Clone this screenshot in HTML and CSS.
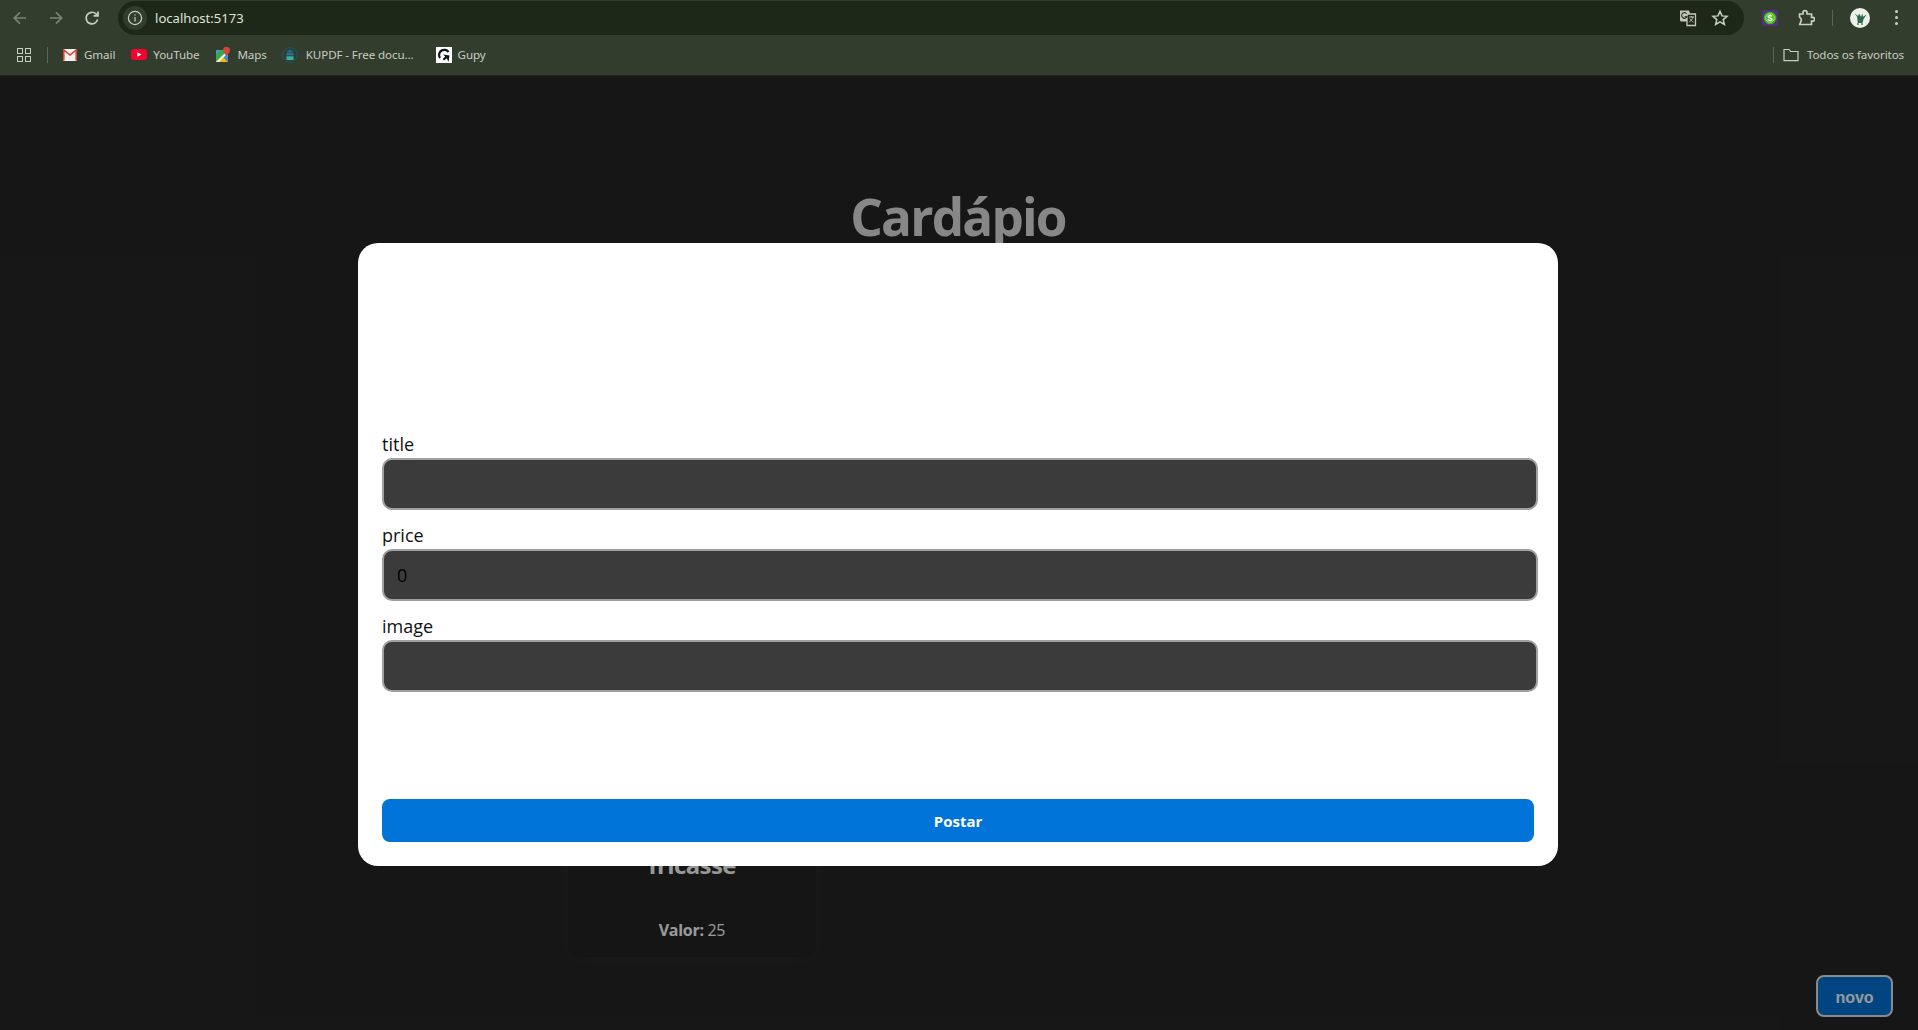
FILE: index.html
```html
<!DOCTYPE html>
<html lang="pt-BR">
<head>
<meta charset="utf-8">
<title>localhost:5173</title>
<link rel="stylesheet" href="styles.css">
</head>
<body>
<header class="browser">
  <div class="toolbar">
    <span class="tool"><svg width="16" height="16" viewBox="0 0 16 16" class="stroke dim"><path d="M14 8H2.500M8 2.300 2.300 8 8 13.700"/></svg></span>
    <span class="tool"><svg width="16" height="16" viewBox="0 0 16 16" class="stroke dim"><path d="M2 8h11.500M8 2.300 13.700 8 8 13.700"/></svg></span>
    <span class="tool"><svg width="16" height="16" viewBox="0 0 16 16" class="stroke"><path d="M13.600 9.400A5.800 5.800 0 1 1 12 3.900L13.800 5.600"/><path d="M14 1.500v4.400H9.600"/></svg></span>
    <div class="omnibox">
      <span class="chip"><svg width="16" height="16" viewBox="0 0 16 16" class="stroke thin"><circle cx="8" cy="8" r="6.600"/><path d="M8 7v4.600M8 4.200v1.400"/></svg></span>
      <span class="url">localhost:5173</span>
      <span class="omni-icons">
        <svg width="18" height="18" viewBox="0 0 18 18"><path d="M1 1.500h9l1 3v8H2.500A1.500 1.500 0 0 1 1 11z" fill="#c4c8bc"/><path d="M8 5h8.500v11.500H8z" fill="#1e2818" stroke="#c4c8bc" stroke-width="1.300"/><path d="M10 8h5M12.500 7v1M14 8c-.5 2-2 4-3.800 5M11 9.500c.8 1.500 2 3 3.500 3.700" fill="none" stroke="#c4c8bc"/><path d="M7.500 4.600a2.800 2.800 0 1 0 .5 3H5.600" fill="none" stroke="#39412f" stroke-width="1.200"/></svg>
        <svg width="18" height="18" viewBox="0 0 18 18" class="stroke thick"><path d="m9 2.300 2 4.600 5 .4-3.800 3.300 1.200 4.900L9 12.900l-4.400 2.600 1.200-4.900L2 7.300l5-.4z"/></svg>
      </span>
    </div>
    <span class="ext"><svg width="16" height="16" viewBox="0 0 16 16"><rect width="16" height="16" rx="2.500" fill="#53307f"/><circle cx="8" cy="8" r="6.300" fill="#3fb512"/><circle cx="8" cy="8" r="4.300" fill="none" stroke="#e8f4de" stroke-width=".6"/><text x="8" y="11.200" text-anchor="middle" class="dollar">$</text></svg></span>
    <span class="puzzle"><svg width="18" height="18" viewBox="0 0 18 18" class="stroke"><path d="M2.500 5H6V3.600a2 2 0 0 1 4 0V5h4.500v3.400h1.200a1.900 1.900 0 0 1 0 3.800h-1.200v3.300H2.800l1.200-3.400a2.200 2.200 0 0 0 0-2.400L2.500 8z"/></svg></span>
    <span class="divider tall"></span>
    <span class="avatar"><svg width="20" height="20" viewBox="0 0 20 20"><circle cx="10" cy="10" r="10" fill="#eef0ea"/><path d="M4.500 5.500l2.500 3 .8 6.500h4.700l1-3.800 3-4.700-3.400 2.200-.8-3.200-1.200 3.200-2-3-1 2.200z" fill="#2c6b4c"/><path d="M8 15v2M12 15v2" stroke="#2c6b4c" stroke-width="1.200"/></svg></span>
    <span class="dots"><i></i><i></i><i></i></span>
  </div>
  <nav class="bookmarks">
    <span class="apps"><i></i><i></i><i></i><i></i></span>
    <span class="divider"></span>
    <a class="mark gmail"><svg width="14" height="12" viewBox="0 0 14 12"><rect width="14" height="12" rx="1" fill="#f1f1ee"/><path d="M.8 11.500V1L7 6l6.200-5v10.500" fill="none" stroke="#d4453a" stroke-width="1.600"/></svg>Gmail</a>
    <a class="mark youtube"><svg width="16" height="11" viewBox="0 0 16 11"><rect width="16" height="11" rx="3" fill="#f7012f"/><path d="m6.300 3.200 4.200 2.300-4.200 2.300z" fill="#fff"/></svg>YouTube</a>
    <a class="mark maps"><svg width="14" height="15" viewBox="0 0 14 15"><path d="M0 3h12v12H0z" fill="#34a853"/><path d="M0 15 6 9l6 6z" fill="#fbbc05"/><path d="M0 15 12 3v3L3 15z" fill="#f1f3e9"/><path d="M12 7v8L8 11z" fill="#4285f4"/><path d="M0 3h4L0 7z" fill="#4f8fe8"/><path d="M10.500 0A3.300 3.300 0 0 1 14 3.300c0 2-3.500 5-3.500 5.500S7 5.300 7 3.300A3.300 3.300 0 0 1 10.500 0z" fill="#d9443a"/></svg>Maps</a>
    <a class="mark kupdf"><svg width="16" height="16" viewBox="0 0 16 16"><circle cx="8" cy="8" r="7.300" fill="none" stroke="#1b5874" stroke-width="1"/><path d="m8 2.500 4 3H4z" fill="#1f6f9c"/><path d="M4.500 6h7v2.500h-7z" fill="#2b6e8e"/><path d="M4.500 9.300h7V13h-7z" fill="#35b39a"/></svg>KUPDF - Free docu...</a>
    <a class="mark gupy"><svg width="16" height="16" viewBox="0 0 16 16"><rect width="16" height="16" fill="#fff"/><path d="M12.500 5A5 5 0 1 0 4 11" fill="none" stroke="#0b1526" stroke-width="2.200"/><path d="m7 7.500 6.500 1-1 6.500-1.700-3.800L8 13.500 6.800 12l2.400-2.400z" fill="#0b1526"/></svg>Gupy</a>
    <span class="divider end"></span>
    <a class="mark all"><svg width="16" height="14" viewBox="0 0 16 14" class="stroke thin"><path d="M1 12.700V1.500h5l1.600 2H15v9.200z"/></svg>Todos os favoritos</a>
  </nav>
</header>

<main class="page">
  <h1 class="heading">Cardápio</h1>
  <section class="menu">
    <article class="card">
      <h2 class="card-title">fricasse</h2>
      <p class="card-price"><b>Valor:</b> 25</p>
    </article>
  </section>
  <button class="new-btn" type="button">novo</button>

  <div class="overlay">
    <form class="modal">
      <div class="field">
        <label class="label" for="title">title</label>
        <input class="input" id="title" type="text">
      </div>
      <div class="field">
        <label class="label" for="price">price</label>
        <input class="input" id="price" type="text" value="0">
      </div>
      <div class="field">
        <label class="label" for="image">image</label>
        <input class="input" id="image" type="text">
      </div>
      <button class="submit" type="button">Postar</button>
    </form>
  </div>
</main>
</body>
</html>
```

FILE: styles.css
```css
* { box-sizing: border-box; }
html, body { height: 100%; }
body {
  margin: 0;
  display: flex;
  flex-direction: column;
  overflow: hidden;
  background: #262626;
  font-family: "Open Sans", "Noto Sans", sans-serif;
}

/* browser chrome */
.browser { flex: none; height: 76px; background: #333d2e; border-bottom: 1px solid #20261c; font-size: 12px; color: #c8cdc0; }
.toolbar { height: 35px; display: flex; align-items: center; padding-left: 2px; }
.tool { width: 36px; height: 35px; display: flex; align-items: center; justify-content: center; }
.stroke { fill: none; stroke: #c9cfc0; stroke-width: 1.7; }
.stroke.dim { stroke: #7b8474; }
.stroke.thin { stroke-width: 1.2; }
.stroke.thick { stroke-width: 1.5; }

.omnibox { margin-left: 8px; width: 1626px; height: 34px; margin-top: 1px; border-radius: 17px; background: #1e2818; display: flex; align-items: center; padding-left: 5px; }
.chip { width: 24px; height: 24px; border-radius: 50%; background: #333d2e; display: flex; align-items: center; justify-content: center; }
.url { margin-left: 8px; font-family: "Noto Sans", sans-serif; font-size: 13.1px; color: #dfe3d8; }
.omni-icons { margin-left: auto; display: flex; gap: 14px; padding-right: 15px; }

.ext { margin-left: 18px; width: 16px; height: 16px; display: flex; }
.puzzle { margin-left: 19px; display: flex; }
.divider { width: 1px; height: 16px; background: #5c6655; }
.divider.tall { margin-left: 17px; }
.avatar { margin-left: 17px; width: 20px; height: 20px; display: flex; }
.dots { margin-left: 25px; display: flex; flex-direction: column; gap: 3px; }
.dots i { width: 3px; height: 3px; border-radius: 50%; background: #c9cfc0; }

.bookmarks { height: 39px; display: flex; align-items: center; padding-left: 17px; }
.apps { width: 14px; height: 14px; display: grid; grid-template-columns: 6px 6px; gap: 2px; margin-right: 16px; }
.apps i { border: 1.5px solid #c9cfc0; }
.mark { display: flex; align-items: center; gap: 7px; font-family: "Noto Sans", sans-serif; font-size: 11.6px; letter-spacing: -.1px; white-space: nowrap; }
.gmail { margin-left: 15px; }
.youtube { margin-left: 16px; gap: 6px; }
.maps { margin-left: 17px; }
.kupdf { margin-left: 15px; gap: 8px; }
.gupy { margin-left: 22px; gap: 6px; }
.divider.end { margin-left: auto; }
.all { margin-left: 9px; margin-right: 14px; gap: 8px; }

/* page underneath the dialog */
.page { flex: 1; min-height: 0; position: relative; overflow: hidden; color: #fff; padding-top: 112px; }
.heading { margin: 0; padding-right: 2px; text-align: center; font-size: 51.2px; line-height: 1.1; font-weight: 700; letter-spacing: -1.8px; color: #e2e2e2; }
.menu { display: grid; grid-template-columns: repeat(3, 248px); column-gap: 19px; justify-content: center; margin-top: 233px; }
.card { height: 480px; border-radius: 12px; background: #242424; box-shadow: 0 0 26px rgba(255,255,255,.03); display: flex; flex-direction: column; align-items: center; justify-content: flex-end; padding-bottom: 16px; }
.card-title { margin: 0 0 38px; font-size: 24px; line-height: 32px; font-weight: 700; letter-spacing: -.6px; color: #fff; }
.card-price { margin: 0; font-size: 16px; line-height: 22px; letter-spacing: -.3px; color: #fff; }
.new-btn { position: absolute; right: 25px; bottom: 13px; width: 77px; height: 42px; padding: 3px 0 0; border: 2px solid #e6e6e6; border-radius: 8px; background: #0074d9; color: #fff; font-family: "Liberation Sans", Arial, sans-serif; font-size: 16px; font-weight: 700; }

/* dialog */
.overlay { position: absolute; inset: 0; background: rgba(0,0,0,.4); display: flex; align-items: center; justify-content: center; padding: 3px 2px 0 0; }
.modal { width: 1200px; height: 623px; border-radius: 20px; background: #fff; padding: 189px 24px 24px; display: flex; flex-direction: column; }
.field { display: flex; flex-direction: column; margin-bottom: 13px; }
.label { height: 26px; font-size: 18px; line-height: 24px; color: #111; }
.input { width: calc(100% + 4px); height: 52px; border: 2px solid #a0a0a0; border-radius: 10px; background: #3b3b3b; padding: 0 13px; font-family: inherit; font-size: 18px; color: #000; outline: 0; }
.submit { margin-top: auto; height: 43px; border: 0; border-radius: 8px; background: #0074d9; color: #fff; font-family: inherit; font-size: 15px; font-weight: 700; }
.dollar { font-family: "Liberation Sans", sans-serif; font-size: 9.500px; font-weight: 700; fill: #fff; }
```
